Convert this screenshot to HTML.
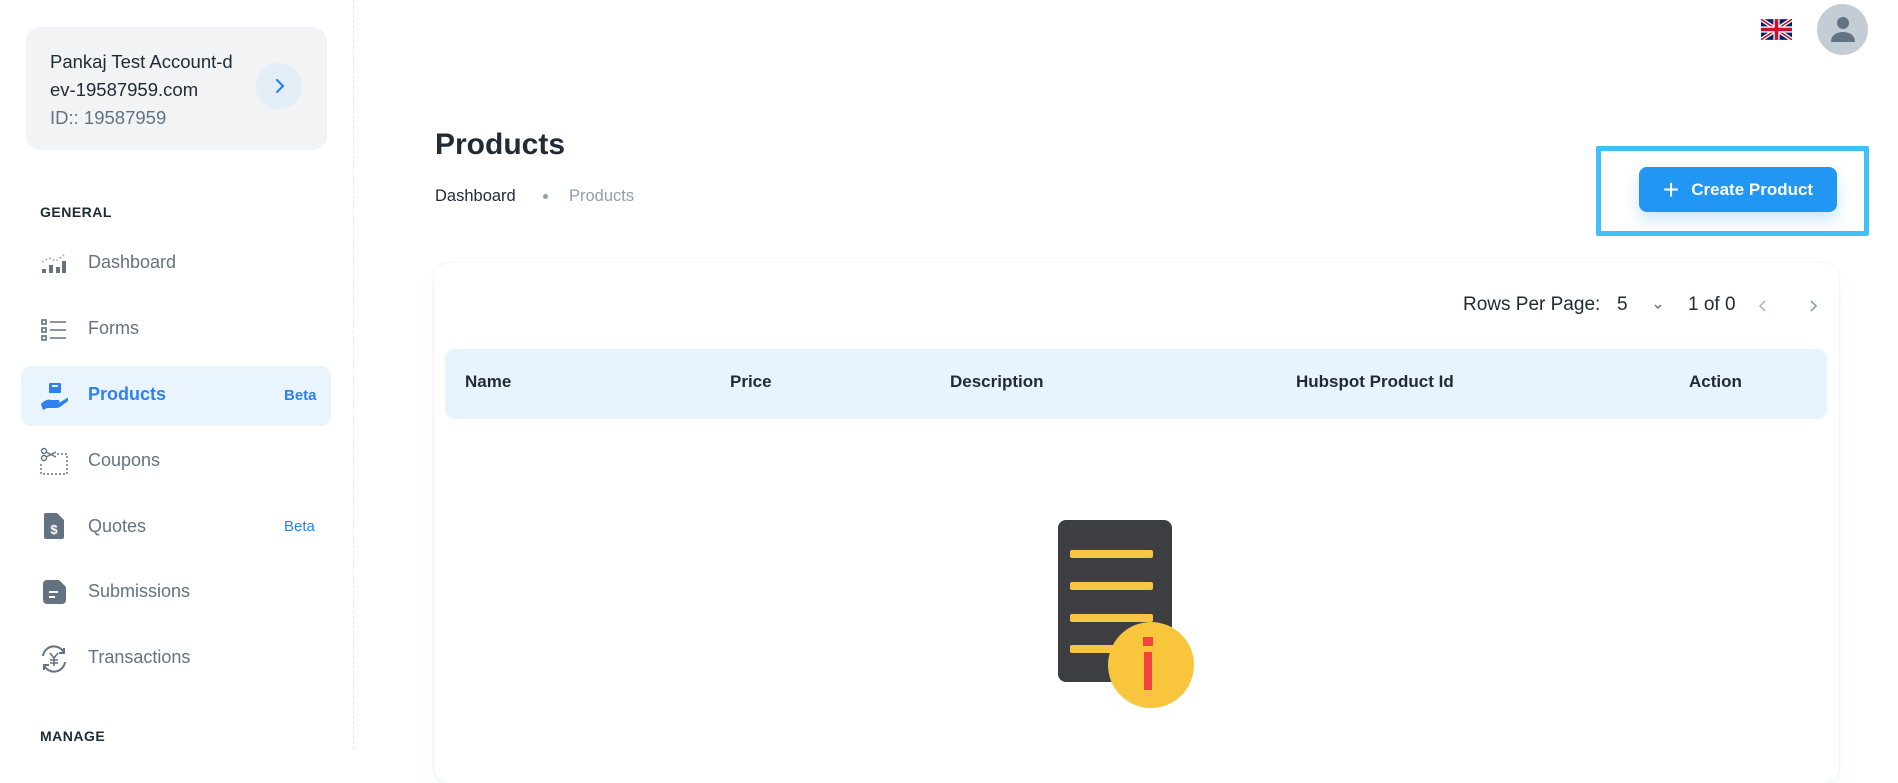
<!DOCTYPE html>
<html><head><meta charset="utf-8"><style>
*{box-sizing:border-box;margin:0;padding:0}
body{width:1898px;height:749px;overflow:hidden;background:#fff;font-family:"Liberation Sans",sans-serif;color:#212b36;position:relative}
.a{position:absolute}
.card{left:26px;top:27px;width:301px;height:123px;background:#f1f3f5;border-radius:14px}
.nav{left:40px;font-size:18px;color:#637381;display:flex;align-items:center}
.sec{left:40px;font-size:14px;font-weight:bold;color:#212b36;letter-spacing:.5px}
.beta{font-size:15px;color:#2f80ed}
.hd{top:372px;font-size:17px;font-weight:bold;color:#212b36}
</style></head><body>
<div class="a card"></div>
<div class="a" style="left:50px;top:48px;font-size:18.5px;line-height:28px;color:#212b36">Pankaj Test Account-d<br>ev-19587959.com<br><span style="color:#637381">ID:: 19587959</span></div>
<div class="a" style="left:256px;top:63px;width:46px;height:46px;border-radius:50%;background:#e3eef7"></div>
<svg class="a" style="left:270px;top:76px" width="20" height="20" viewBox="0 0 20 20"><path d="M7 4l6 6-6 6" fill="none" stroke="#2f80ed" stroke-width="2.2" stroke-linecap="round"/></svg>
<div class="a" style="left:353px;top:0;height:749px;border-left:1px dashed #e5e8eb"></div>

<div class="a sec" style="top:204px">GENERAL</div>
<div class="a" style="left:21px;top:366px;width:310px;height:60px;background:#eaf4fd;border-radius:10px"></div>

<svg class="a" style="left:41px;top:252px" width="26" height="22" viewBox="0 0 26 22"><rect x="1" y="17" width="4" height="4" fill="#637381"/><rect x="8" y="13" width="4" height="8" fill="#637381"/><rect x="15" y="15" width="4" height="6" fill="#637381"/><rect x="21" y="9" width="4" height="12" fill="#637381"/><path d="M1 10l7-4 7 3 9-7" fill="none" stroke="#aab3bd" stroke-width="1.6" stroke-dasharray="2 2"/></svg>
<div class="a nav" style="left:88px;top:252px">Dashboard</div>

<svg class="a" style="left:41px;top:319px" width="26" height="22" viewBox="0 0 26 22"><g fill="none" stroke="#637381" stroke-width="1.6"><rect x="1" y="1" width="4" height="4"/><rect x="1" y="9" width="4" height="4"/><rect x="1" y="17" width="4" height="4"/><path d="M9 3h16M9 11h16M9 19h16"/></g></svg>
<div class="a nav" style="left:88px;top:318px">Forms</div>

<svg class="a" style="left:40px;top:382px" width="28" height="28" viewBox="0 0 28 28"><rect x="9" y="1" width="12" height="10" rx="1" fill="#2f80ed"/><rect x="12" y="3" width="6" height="2" fill="#eaf4fd"/><path d="M1 22c4-4 7-5 10-4l7 0c2 0 2 3 0 3h-6l7 0 8-5c2-1 3 1 1 3l-8 6c-2 1-4 1-6 1H7l-4 2z" fill="#2f80ed"/></svg>
<div class="a nav" style="left:88px;top:384px;color:#2f80ed;font-weight:bold">Products</div>
<div class="a beta" style="left:284px;top:387px;font-weight:bold">Beta</div>

<svg class="a" style="left:40px;top:447px" width="28" height="28" viewBox="0 0 28 28"><g fill="none" stroke="#637381" stroke-width="1.4"><circle cx="4" cy="4" r="2.5"/><circle cx="4" cy="11" r="2.5"/><path d="M6 5l10 5M6 10l10-5"/><path d="M17 7h10v20H1V15" stroke-dasharray="2 2"/></g></svg>
<div class="a nav" style="left:88px;top:450px">Coupons</div>

<svg class="a" style="left:44px;top:513px" width="20" height="26" viewBox="0 0 20 26"><path d="M2 0h11l7 7v17a2 2 0 0 1-2 2H2a2 2 0 0 1-2-2V2a2 2 0 0 1 2-2z" fill="#637381"/><text x="10" y="21" font-size="13" font-weight="bold" fill="#fff" text-anchor="middle" font-family="Liberation Sans">$</text></svg>
<div class="a nav" style="left:88px;top:516px">Quotes</div>
<div class="a beta" style="left:284px;top:518px">Beta</div>

<svg class="a" style="left:43px;top:580px" width="23" height="24" viewBox="0 0 23 24"><path d="M4 0h12l7 7v13a4 4 0 0 1-4 4H4a4 4 0 0 1-4-4V4a4 4 0 0 1 4-4z" fill="#637381"/><path d="M6 12h9M6 17h6" stroke="#fff" stroke-width="2"/></svg>
<div class="a nav" style="left:88px;top:581px">Submissions</div>

<svg class="a" style="left:40px;top:645px" width="28" height="28" viewBox="0 0 28 28"><g fill="none" stroke="#637381" stroke-width="2"><path d="M3 11a11 11 0 0 1 21-3M25 17a11 11 0 0 1-21 3"/><path d="M24 3v5h-5M4 25v-5h5"/><path d="M10 8l4 5 4-5M14 13v8M10 15h8M10 18h8" stroke-width="1.6"/></g></svg>
<div class="a nav" style="left:88px;top:647px">Transactions</div>

<div class="a sec" style="top:728px">MANAGE</div>

<svg class="a" style="left:1761px;top:19px" width="31" height="21" viewBox="0 0 60 40"><rect width="60" height="40" fill="#012169"/><path d="M0 0L60 40M60 0L0 40" stroke="#fff" stroke-width="8"/><path d="M0 0L60 40M60 0L0 40" stroke="#c8102e" stroke-width="3"/><path d="M30 0v40M0 20h60" stroke="#fff" stroke-width="12"/><path d="M30 0v40M0 20h60" stroke="#c8102e" stroke-width="7"/></svg>
<div class="a" style="left:1817px;top:4px;width:51px;height:51px;border-radius:50%;background:#c4cdd5"></div>
<svg class="a" style="left:1829px;top:15px" width="28" height="28" viewBox="0 0 28 28"><circle cx="14" cy="8" r="6" fill="#637381"/><path d="M2 27c0-7 6-10 12-10s12 3 12 10z" fill="#637381"/></svg>

<div class="a" style="left:435px;top:128px;font-size:30px;font-weight:bold">Products</div>
<div class="a" style="left:435px;top:187px;font-size:16.5px;color:#212b36">Dashboard</div>
<div class="a" style="left:543px;top:194px;width:5px;height:5px;border-radius:50%;background:#919eab"></div>
<div class="a" style="left:569px;top:187px;font-size:16.5px;color:#919eab">Products</div>

<div class="a" style="left:1596px;top:146px;width:273px;height:90px;border:5px solid #40c0f8;border-radius:2px"></div>
<div class="a" style="left:1639px;top:167px;width:198px;height:45px;background:#2196f3;border-radius:8px;box-shadow:0 8px 16px rgba(33,150,243,.24);color:#fff;font-weight:bold;font-size:17px;display:flex;align-items:center;justify-content:center;gap:12px"><span style="font-size:28px;font-weight:normal;line-height:1">+</span>Create Product</div>

<div class="a" style="left:434px;top:263px;width:1405px;height:520px;border-radius:16px;box-shadow:0 0 2px rgba(145,158,171,.25),0 12px 24px -4px rgba(145,158,171,.08)"></div>
<div class="a" style="left:1463px;top:294px;font-size:19px;color:#212b36">Rows Per Page:</div>
<div class="a" style="left:1617px;top:294px;font-size:19px">5</div>
<svg class="a" style="left:1651px;top:299px" width="14" height="14" viewBox="0 0 14 14"><path d="M4 6l3 3 3-3" fill="none" stroke="#637381" stroke-width="1.5"/></svg>
<div class="a" style="left:1688px;top:294px;font-size:19px">1 of 0</div>
<svg class="a" style="left:1756px;top:299px" width="14" height="14" viewBox="0 0 14 14"><path d="M9 2L4 7l5 5" fill="none" stroke="#b0b8c1" stroke-width="1.6"/></svg>
<svg class="a" style="left:1806px;top:299px" width="14" height="14" viewBox="0 0 14 14"><path d="M5 2l5 5-5 5" fill="none" stroke="#919eab" stroke-width="1.6"/></svg>

<div class="a" style="left:445px;top:349px;width:1382px;height:70px;background:#e8f4fd;border-radius:10px"></div>
<div class="a hd" style="left:465px">Name</div>
<div class="a hd" style="left:730px">Price</div>
<div class="a hd" style="left:950px">Description</div>
<div class="a hd" style="left:1296px">Hubspot Product Id</div>
<div class="a hd" style="left:1689px">Action</div>

<svg class="a" style="left:1055px;top:515px" width="160" height="220" viewBox="1055 515 160 220"><rect x="1058" y="520" width="114" height="162" rx="8" fill="#3d3e42"/><g fill="#f6c543"><rect x="1070" y="550" width="83" height="8" rx="2"/><rect x="1070" y="582" width="83" height="8" rx="2"/><rect x="1070" y="614" width="83" height="8" rx="2"/><rect x="1070" y="645" width="83" height="8" rx="2"/></g><circle cx="1151" cy="665" r="43" fill="#f8c53d"/><rect x="1143" y="637" width="10" height="9" fill="#f0443c"/><rect x="1144" y="652" width="8" height="38" fill="#f0443c"/></svg>
</body></html>
